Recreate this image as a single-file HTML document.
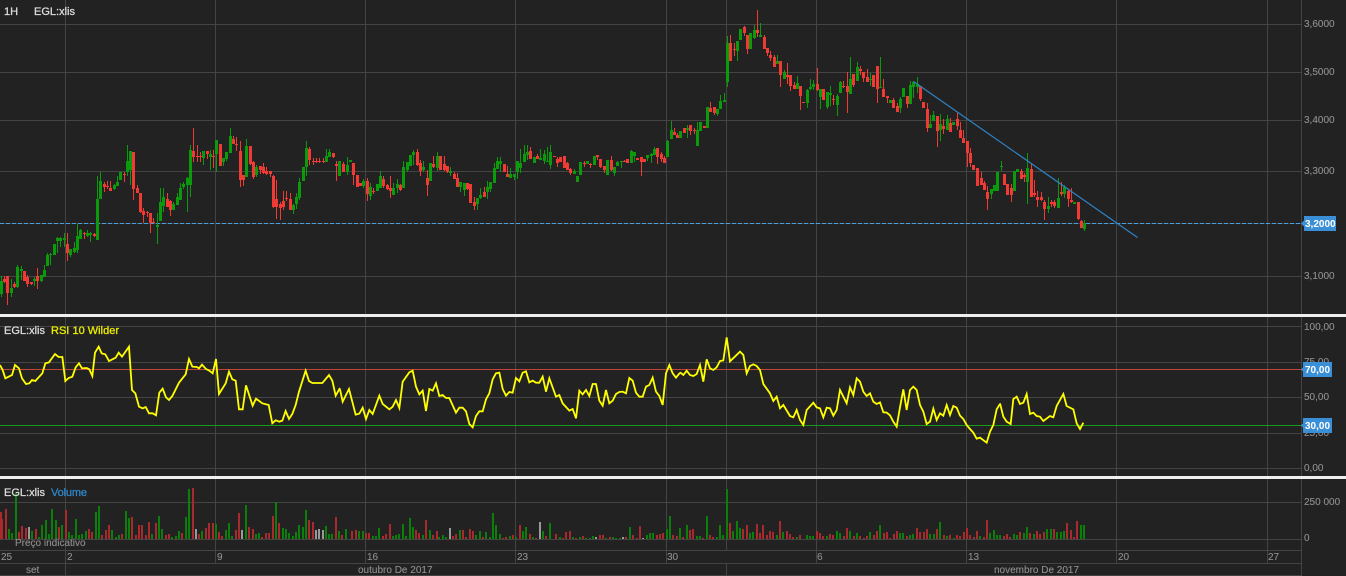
<!DOCTYPE html>
<html>
<head>
<meta charset="utf-8">
<style>
html,body{margin:0;padding:0;background:#222;width:1346px;height:576px;overflow:hidden}
svg{display:block}
text{font-family:"Liberation Sans",Arial,sans-serif;font-size:10px;fill:#909090;stroke:#909090;stroke-width:.1px}
.b{font-size:11px;fill:#dcdcdc;stroke:#dcdcdc;stroke-width:.3px}
.w{font-weight:bold;fill:#fff;stroke:none}
</style>
</head>
<body>
<svg id="s" xmlns="http://www.w3.org/2000/svg" width="1346" height="576" viewBox="0 0 1346 576">
<rect width="1346" height="576" fill="#222"/>
<g fill="#444" shape-rendering="crispEdges">
<rect x="0" y="24" width="1302" height="1"/><rect x="0" y="72" width="1302" height="1"/><rect x="0" y="120" width="1302" height="1"/><rect x="0" y="171" width="1302" height="1"/><rect x="0" y="223" width="1302" height="1"/><rect x="0" y="276" width="1302" height="1"/>
<rect x="0" y="326" width="1302" height="1"/><rect x="0" y="362" width="1302" height="1"/><rect x="0" y="397" width="1302" height="1"/><rect x="0" y="433" width="1302" height="1"/><rect x="0" y="468" width="1302" height="1"/>
<rect x="0" y="502" width="1302" height="1"/><rect x="0" y="539" width="1302" height="1"/><rect x="0" y="550" width="1302" height="1"/><rect x="0" y="563" width="1302" height="1"/><rect x="0" y="575" width="1302" height="1"/>
<rect x="65" y="0" width="1" height="576"/>
<rect x="215" y="0" width="1" height="563"/><rect x="365" y="0" width="1" height="563"/><rect x="515" y="0" width="1" height="563"/><rect x="666" y="0" width="1" height="563"/>
<rect x="726" y="0" width="1" height="550"/><rect x="726" y="563" width="1" height="13"/>
<rect x="816" y="0" width="1" height="563"/><rect x="966" y="0" width="1" height="563"/><rect x="1116" y="0" width="1" height="563"/><rect x="1267" y="0" width="1" height="563"/>
<rect x="1301" y="0" width="1" height="576"/>
</g>
<line x1="0" y1="223.5" x2="1303" y2="223.5" stroke="#4a9fe0" stroke-width="1" stroke-dasharray="4 2" shape-rendering="crispEdges"/>
<g id="c" shape-rendering="crispEdges"></g>
<line x1="913.5" y1="81.5" x2="1137.5" y2="237.5" stroke="#2f82c4" stroke-width="1.2"/>
<g id="v" shape-rendering="crispEdges"></g>

<rect x="0" y="369" width="1303" height="1" fill="#c0443c" shape-rendering="crispEdges"/>
<rect x="0" y="425" width="1303" height="1" fill="#1a9a1a" shape-rendering="crispEdges"/>

<g fill="none" stroke="#ffff00" stroke-width="5.4" stroke-linejoin="miter">
<polyline transform="translate(0,310) scale(.33333)" points="0,165 8,180 16,205 36,195 45,165 57,175 66,205 78,222 88,220 96,210 106,213 127,190 136,160 147,157 165,132 176,141 187,141 196,213 206,204 217,200 227,172 237,160 246,175 260,174 268,178 277,198 285,128 296,110 305,130 316,133 327,153 347,143 356,128 366,140 387,110 396,240 406,250 417,290 428,295 437,291 447,310 458,310 468,316 478,248 488,236 498,262 507,270 517,258 537,218 557,193 567,147 577,170 590,171 597,175 606,164 618,177 628,182 638,190 648,147 657,252 677,220 687,185 697,208 707,212 717,298 728,298 738,226 758,287 768,266 787,280 806,285 817,340 827,331 838,335 847,332 857,303 867,327 877,312 887,285 897,245 917,182 927,213 937,219 967,219 987,195 997,212 1007,257 1020,234"/>
<polyline transform="translate(340,340) scale(.33333)" points="0,148 8,185 27,147 47,224 58,221 68,203 78,237 88,210 98,222 118,167 128,192 148,208 158,200 168,180 178,204 188,125 208,97 218,92 228,140 238,163 248,152 258,213 268,147 278,152 288,130 298,168 308,165 318,174 328,174 348,218 358,203 368,203 378,214 388,252 398,262 408,228 418,214 428,214 438,178 448,160 458,118 468,100 478,98 488,147 498,167 508,156 518,158 528,114 538,124 548,98 558,94 568,127 578,122 588,128 598,128 608,110 618,155 628,115 648,170 658,165 668,190 688,212 698,207 708,235 718,152 728,163 738,150 748,168 758,132 768,132 778,182 788,197 798,150 808,190 818,182 828,162 838,156 848,155 858,160 868,114 878,122 888,158 898,170 908,170 918,140 928,135 938,113 948,155 958,168 968,195 978,100 988,75 998,100 1008,113 1020,98"/>
<polyline transform="translate(660,330) scale(.33333)" points="60,127 70,135 80,122 90,135 100,138 110,132 120,105 130,155 140,88 150,115 160,120 170,112 180,93 190,91 200,22 210,94 240,65 250,75 260,130 270,108 280,103 290,108 300,120 310,162 330,190 340,213 350,200 360,235 370,225 390,258 400,262 410,240 420,270 430,285 440,240 460,218 470,232 480,235 490,262 500,233 510,235 520,257 530,240 540,180 560,220 570,172 580,195 590,145 600,155 610,185 620,198 630,190 640,215 650,222 660,217 670,247 680,248 690,256 700,275 710,290 720,232 730,178 740,240 750,180 760,170 770,180 780,225 790,245 800,282 810,275 820,236 830,270 840,250 850,257 860,225 870,255 880,228 890,233 900,257 910,267 920,285 930,297 940,308 950,326 960,323 980,338 990,305 1000,285 1010,238 1020,222"/>
<polyline transform="translate(1000,320) scale(.33333)" points="0,250 10,290 20,305 32,312 40,237 50,230 60,252 70,248 80,222 90,282 100,278 110,288 120,290 130,303 150,288 160,292 170,258 190,222 200,258 220,268 230,310 240,327 250,308"/>
</g>

<rect x="0" y="314" width="1346" height="3" fill="#efefef"/>
<rect x="0" y="476" width="1346" height="3" fill="#efefef"/>

<text class="b" x="4" y="15">1H</text>
<text class="b" x="34" y="15">EGL:xlis</text>
<text class="b" x="4" y="334">EGL:xlis</text>
<text class="b" x="51" y="334" style="fill:#ecec00;stroke:#ecec00" textLength="68">RSI 10 Wilder</text>
<text class="b" x="4" y="496">EGL:xlis</text>
<text class="b" x="51" y="496" style="fill:#2f86c9;stroke:#2f86c9" textLength="36">Volume</text>
<text x="15" y="546">Preço indicativo</text>

<text x="1304" y="27">3,6000</text>
<text x="1304" y="75">3,5000</text>
<text x="1304" y="123">3,4000</text>
<text x="1304" y="174">3,3000</text>
<text x="1304" y="279">3,1000</text>
<polygon points="1301,223.5 1304,220.5 1304,226.5" fill="#3a8fd6"/>
<rect x="1304" y="216" width="32" height="15" fill="#3a8fd6"/>
<text class="w" x="1305" y="227">3,2000</text>

<text x="1304" y="330">100,00</text>
<text x="1304" y="365">75,00</text>
<text x="1304" y="400">50,00</text>
<text x="1304" y="436">25,00</text>
<text x="1304" y="471">0,00</text>
<polygon points="1301,369.5 1304,366.5 1304,372.5" fill="#3a8fd6"/>
<rect x="1303" y="362" width="29" height="15" fill="#3a8fd6"/>
<text class="w" x="1305" y="373">70,00</text>
<polygon points="1301,425.5 1304,422.5 1304,428.5" fill="#3a8fd6"/>
<rect x="1303" y="418" width="29" height="15" fill="#3a8fd6"/>
<text class="w" x="1305" y="429">30,00</text>

<text x="1304" y="505">250 000</text>
<text x="1304" y="541">0</text>

<text x="1" y="560">25</text><text x="67" y="560">2</text><text x="217" y="560">9</text><text x="367" y="560">16</text><text x="517" y="560">23</text><text x="667" y="560">30</text><text x="817" y="560">6</text><text x="968" y="560">13</text><text x="1118" y="560">20</text><text x="1268" y="560">27</text>
<text x="26" y="573">set</text>
<text x="358" y="573">outubro De 2017</text>
<text x="994" y="573">novembro De 2017</text>
</svg>
<script>
(function(){
var NS="http://www.w3.org/2000/svg",cg=document.getElementById("c"),vg=document.getElementById("v");
function R(g,x,y,w,h,f){var r=document.createElementNS(NS,"rect");r.setAttribute("x",x);r.setAttribute("y",y);r.setAttribute("width",w);r.setAttribute("height",Math.max(h,1));r.setAttribute("fill",f);g.appendChild(r);}
var segs=[
[0.7,339.3,"g281,294,276,297 r279,282,276,283 r276,293,276,305 g288,293,279,297 r284,287,282,288 g267,287,265,288 g269,271,266,280 r271,281 r277,284,275,287 r282,284,282,285 g279,281,277,286 r276,281,268,289 g275,281,275,282 g270,277,265,277 g255,266,253,266 g254,255,253,265 g244,255 g238,241,237,253 g238,241,237,247 g238,240,233,247 r244,253,233,261 g249,255,249,257 g248,252,242,253 g236,250,224,253 g230,239,229,239 r233,234,232,239 g233,236,230,237 g233,235,232,242 r234,236,233,237 g199,240,176,240 g181,199,172,199 r184,187,182,192 r186,187,181,189 r188,191,181,191 g185,189,184,190 g182,186,176,186 g172,180 r174,175,172,182 g161,172,145,176 g151,170,151,185 r152,189,152,200 r188,193,185,193 r193,212,193,213 r211,215,208,223 r212,213,211,217 r213,223,213,233 r222,223,218,223 g225,227,213,244 g202,221,188,221 g197,206,188,212 r199,207,193,207 r201,210,200,216 g204,210,202,210 g197,205,193,205 g188,200,183,200 g184,187,182,189 g178,185,177,212 g150,185,145,197 r151,157,128,162 r156,157,145,162 r156,157,152,162 g151,158,151,165 r151,154,151,159 g154,157,150,170 r156,157,150,168 g140,154,140,172 r144,166 g158,162,158,166 g152,159,152,161 g136,153,128,153 r139,144,136,144 r144,145,137,151 r151,180,141,187 r175,180,175,186 g146,177,139,177 r146,164,146,165 r162,177,161,179 g167,175,165,177 r166,170,166,174 r167,173,163,174 r171,174,167,175 r171,174,171,177 r176,207,175,208 r199,207,180,219 r204,208,202,220 r201,207,191,210 r198,199,191,201 r199,210,193,210 g205,210,204,214 g197,204,193,209 g182,198,178,200 g167,181 g148,167,141,176 r149,160,147,165 r161,162,158,165 r161,162,158,163 r161,162,158,163 r161,162,158,163 g156,162,149,162 g152,157,149,157 r153,157,153,158 r164,166,161,181 g161,176"],
[343.3,677.3,"r164,172,162,172 g165,172,157,175 g160,162 r163,175,163,185 r175,187 r183,186 g181,186,179,188 r181,194,178,201 g187,196,183,200 r191,192,188,194 g184,191 g176,188,171,188 r179,186,176,188 r185,189,184,190 r188,191,176,198 g188,195,183,195 g184,188,179,193 r185,190,184,191 g167,188,161,188 g162,170,162,172 g155,166 g152,155,150,165 r152,165,149,166 r163,171,160,176 g167,170,161,172 r178,185,170,196 g163,181 r164,167,156,168 g156,168,152,171 r156,170 r164,170,156,171 r166,172,166,173 g171,173,167,176 r174,179,172,179 r178,187,173,187 g182,187,182,192 g183,190,183,196 r183,189,183,190 r184,203 r202,206,197,210 g198,204,198,210 g195,198,188,199 r192,197,187,197 g187,192,181,199 g182,189,182,192 g168,183,163,183 g161,169,157,169 g161,164,157,172 r164,172 r174,177,166,177 g174,178,168,178 g174,177,174,180 g161,172,161,179 g163,168,149,173 g154,162,145,162 g152,155,145,160 r151,159,147,159 g157,163 r156,159,154,159 g158,160,149,160 g154,161,150,164 g161,162,147,162 g152,165,145,169 r156,157 r159,163,157,167 r157,162 r156,168 r163,170,162,170 r169,173,168,175 g171,174,169,174 g176,182 g162,175 r163,164,161,167 g161,164 r164,165,163,168 g156,165 r155,157,155,160 r159,167,159,168 r166,170,166,173 g160,175 r160,170,156,171 g167,173,167,176 g162,166,161,166 g161,162,161,168 r161,162,160,162 r159,163 g151,163,150,163 g152,156,152,162 r158,160 r157,162,157,176 r159,162 g155,158,155,161 g154,156,153,163 g149,155,147,155 r148,157,148,164 r154,159,152,162 r158,163,156,163 g141,157,140,157 g130,139,121,139 r132,135,128,135 r135,138,133,138"],
[680.3,973.3,"g131,138 r128,133 g128,130,125,138 r125,131,125,135 r130,131,128,134 g130,146,122,146 g122,131 r126,128 g107,128 r108,112,102,112 r107,113,107,115 g109,114,109,116 g101,109,95,109 g100,102,93,102 g43,82,36,87 r43,61,35,61 r49,50,43,56 g41,51,41,61 g29,40 r27,33,26,36 r35,49,35,54 g33,49 g30,38,25,39 r30,33,10,37 g35,37,23,37 r37,49,35,49 r48,53,48,56 r55,58,51,61 r57,67,55,67 g61,64,55,64 r61,75,61,87 g72,79,70,79 r75,77,63,84 r75,86,75,91 r85,89,82,89 g83,89,76,89 r86,96,86,110 r102,103 g90,103,89,108 g87,89,79,90 g84,87,80,90 r84,90,68,91 g89,97,89,109 r89,100 g92,107,92,109 g93,95,86,106 r99,100,95,105 g96,105,94,116 g82,93,81,93 r86,87,81,88 r86,92,72,113 g79,94,57,94 r74,85,74,87 g67,81,62,81 r69,71,66,75 r72,78,72,82 r77,82,69,82 g79,80,73,86 r75,87 r66,89,66,103 g87,88,57,88 r89,97,79,97 r96,98,96,103 g100,103 r100,108,98,108 r106,112,103,112 g99,108,97,113 g88,97 r96,104,96,108 g85,104,81,104 g82,87,81,98 g84,87,77,93 r86,99,86,101 r102,108 r109,128,103,132 g124,128,115,128 g115,121,111,121 r116,131,116,147 g124,130,114,141 r126,129,119,134 g119,130,115,130 r123,132,118,132 g122,125 r119,126,113,130 r130,138,122,138 r138,143,130,143 r141,153,141,167 r153,163,148,167 r165,170"],
[977.3,1084.3,"r168,186 r178,185,172,185 r183,190,181,190 r192,199,186,210 g189,194,189,199 g185,191 g172,191 g166,167,161,171 r174,185 r184,195 r188,195,184,202 g171,191 g169,172 r171,179,169,179 r175,177,173,182 g168,182,153,204 r169,197,163,197 r193,195,180,197 r197,200,191,207 r197,200,192,201 r202,209,200,220 g206,209,197,213 r202,204,200,207 r202,206,200,208 g198,208,178,208 r192,194,182,196 g187,194,185,198 r191,199,190,207 r200,202,188,203 g202,204 r202,219,202,220 r221,228,220,228 g223,229,220,231"]
];
var G="#0b9a0b",D="#ef3b33";
segs.forEach(function(s){
 var a=s[2].split(" "),n=a.length,dx=(s[1]-s[0])/(n-1);
 a.forEach(function(t,i){
  var c=t[0]=="g"?G:D,p=t.slice(1).split(",").map(Number),top=p[0],bot=p[1],wt=p.length>2?p[2]:top,wb=p.length>3?p[3]:bot;
  var x=Math.round(s[0]+dx*i);
  R(cg,x,wt,1,wb-wt,c);
  R(cg,x-1,top,3,bot-top,c);
 });
});
var vols=[
[0,"r2,108 r5,130 r18,100 g27,160 g36,172 g47,50 r57,168 r67,150 r77,156 w87,153 g96,165 r107,160 g116,183 g126,147 g137,132 g146,174 g156,99 g167,132 r177,153 g186,147 r198,102 g207,168 g217,178 g228,129 g237,177 g247,175 g258,165 r267,159 r276,168 g288,108 g297,90 r306,177 r318,162 r327,147 g336,162 g348,183 g357,177 r366,174 g378,105 g387,126 r396,123 r408,177 r417,147 r426,147 r438,177 r447,138 g456,174 r468,141 g477,120 g486,159 r498,177 r507,174 g516,183 g528,180 g537,165 r547,171 g558,123 g567,39 r578,36 w588,159 r597,174 g607,165 r618,156 r628,141 r638,141 g648,144 r657,168 r667,180 g678,162 g687,141 g697,180 r708,162 r717,111 w727,162 g738,87 r747,153 r758,159 g767,174 g777,171 r786,183 r798,171 r807,171 r818,120 g828,78 r837,141 g848,156 g858,159 g867,171 g878,180 g888,168 g897,147 g908,153 g918,102 r927,132 r938,138 w948,162 w957,159 w968,162 g978,150 g987,174 g997,174 r1008,123 g1018,165 r1027,177 g1038,159 r1057,165 r1068,162 g1077,165 g1088,165 r1098,171 r1108,171 g1118,180 g1128,180 g1138,156 r1148,180 r1158,174 r1170,144 g1178,180 g1188,177 g1198,174 g1208,144 g1218,180 g1230,126 g1238,153 r1248,162 r1258,171 g1268,177 r1278,132 g1290,162 r1299,177 r1310,165 g1318,183 g1328,177 g1338,183"],
[450,"w0,156 r8,180 r18,174 g30,162 r38,162 r48,183 r60,159 r68,165 g78,177 g90,165 r98,183 g108,168 g120,183 g129,111 g138,147 g150,174 r158,186 r168,183 g180,180 r188,177 g198,183 r210,147 g218,165 g228,153 r240,174 g249,183 r258,186 w270,138 g279,165 r288,180 g300,141 r318,174 g330,183 r339,186 r348,168 r360,165 g369,183 r378,186 g390,183 r399,180 g408,186 g420,186 g429,180 w438,183 r450,177 r459,177 g468,186 r480,183 g489,183 g498,186 g510,186 w519,183 r528,183 g540,153 r549,177 r561,186 r570,150 w579,186 g590,177 g600,171 g609,171 r621,177 r630,174 r639,171 g651,159 g660,120 r669,177 r681,180 g690,156 r699,183 g711,147 r720,162 r729,159 g741,180 g750,180 r759,186 g771,120 r780,177 r789,183 g801,183 g810,147 g819,177 g831,39 r840,141 g849,165 g861,135 g870,156 r879,159 r891,147 g900,171 g909,168 r921,144 r930,171 r939,147 r951,177 r960,165 r969,168 g981,177 r990,135 g999,168 r1011,165 r1020,174 r1029,183 g1041,183 r1050,177 g1071,177 g1080,180 g1089,180 r1101,165 r1110,171 r1119,180 g1131,180 r1140,174 r1149,177 g1161,165 g1170,171 r1182,180 r1191,156 g1200,165 r1212,180 g1221,171 r1230,180 r1242,186 r1251,180 g1260,168 r1272,177 r1281,165 g1290,147 r1302,171 r1311,168 r1320,186 r1332,174 r1341,165"],
[896,"g12,171 g22,171 r32,180 g42,177 g52,174 r62,156 r72,168 r84,168 r93,159 g102,174 g114,174 r123,159 g132,138 r144,177 g153,180 r162,177 g174,186 r183,177 r192,180 r204,168 r213,156 r222,177 r234,183 r243,165 g252,180 r264,183 r273,132 g282,171 g294,162 g303,177 g312,177 r324,180 r333,174 r342,183 g354,174 g363,177 r372,168 g384,171 g393,153 r402,171 g414,174 r423,165 r432,174 r444,168 g453,159 g465,159 r474,159 g483,168 g495,168 g504,165 r513,141 r525,162 r534,183 r543,135 g555,147 g564,147"]
];
var C={g:"#0a800a",r:"#a82a2c",w:"#9a9a9a"};
vols.forEach(function(s){
 s[1].split(" ").forEach(function(t){
  var p=t.slice(1).split(",").map(Number),x=Math.round(s[0]+p[0]/3-1),y=Math.round(476+p[1]/3);
  R(vg,x,y,2,539-y,C[t[0]]);
 });
});
})();
</script>
</body>
</html>
